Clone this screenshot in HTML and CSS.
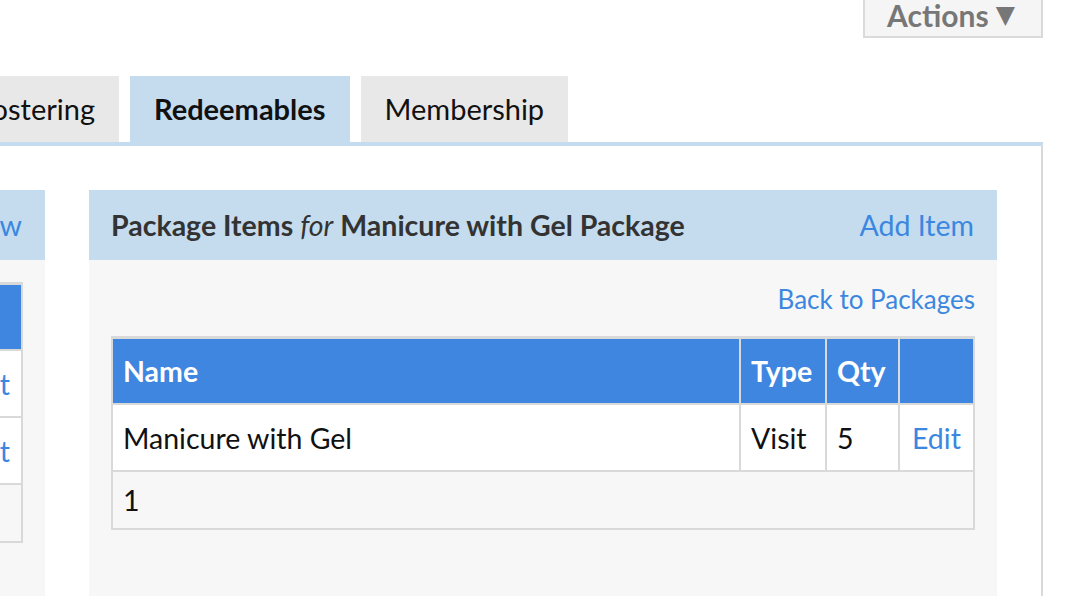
FILE: index.html
```html
<!DOCTYPE html>
<html>
<head>
<meta charset="utf-8">
<link rel="stylesheet" href="styles.css">
</head>
<body>
<div class="page">
  <div class="topbar">
    <div class="actions">Actions <span class="caret">▼</span></div>
  </div>
  <div class="tabs">
    <div class="tab tab-first">Rostering</div>
    <div class="tab tab-active">Redeemables</div>
    <div class="tab">Membership</div>
  </div>
  <div class="panel">
    <div class="box box-left">
      <div class="box-head">
        <span class="box-title">Packages</span>
        <a class="link">Add New</a>
      </div>
      <div class="box-body">
        <table class="grid">
          <thead>
            <tr><th>Name</th><th class="col-edit"></th></tr>
          </thead>
          <tbody>
            <tr><td>Manicure</td><td class="col-edit"><a class="link">Edit</a></td></tr>
            <tr><td>Pedicure</td><td class="col-edit"><a class="link">Edit</a></td></tr>
          </tbody>
          <tfoot>
            <tr><td colspan="2">1</td></tr>
          </tfoot>
        </table>
      </div>
    </div>
    <div class="box box-main">
      <div class="box-head">
        <span class="box-title">Package Items <i>for</i> Manicure with Gel Package</span>
        <a class="link">Add Item</a>
      </div>
      <div class="box-body">
        <div class="back-row"><a class="link">Back to Packages</a></div>
        <table class="grid">
          <thead>
            <tr><th>Name</th><th class="col-type">Type</th><th class="col-qty">Qty</th><th class="col-edit"></th></tr>
          </thead>
          <tbody>
            <tr><td>Manicure with Gel</td><td class="col-type">Visit</td><td class="col-qty">5</td><td class="col-edit"><a class="link">Edit</a></td></tr>
          </tbody>
          <tfoot>
            <tr><td colspan="4">1</td></tr>
          </tfoot>
        </table>
      </div>
    </div>
  </div>
</div>
</body>
</html>
```
FILE: styles.css
```css
html, body {
  margin: 0;
  padding: 0;
  background: #ffffff;
  overflow: hidden;
}
body {
  font-family: Lato, "Open Sans", sans-serif;
  font-size: 28.5px;
  color: #111111;
  width: 1090px;
  height: 596px;
}
.page {
  width: 1043px;
}
.topbar {
  display: flex;
  justify-content: flex-end;
  height: 38px;
}
.actions {
  box-sizing: border-box;
  width: 180px;
  height: 62px;
  margin-top: -24px;
  border: 2px solid #dadada;
  background: #f5f5f5;
  color: #777777;
  font-weight: 700;
  font-size: 30px;
  display: flex;
  align-items: flex-end;
  justify-content: center;
  padding-bottom: 7px;
  padding-right: 4px;
  line-height: 28px;
}
.caret {
  font-family: "DejaVu Sans", sans-serif;
  font-size: 25px;
  margin-left: 7px;
}
.tabs {
  display: flex;
  gap: 11px;
  margin-top: 38px;
  height: 66px;
}
.tab {
  background: #e8e8e8;
  line-height: 66px;
  padding: 0 24px;
  font-size: 29px;
  white-space: nowrap;
}
.tab-first {
  box-sizing: border-box;
  width: 180px;
  margin-left: -61px;
  text-align: right;
}
.tab-active {
  background: #c4dcee;
  font-weight: 700;
}
.panel {
  margin-left: -300px;
  border-top: 4px solid #c4dcee;
  border-right: 2px solid #d9d9d9;
  padding: 44px 44px 0 0;
  display: flex;
  gap: 44px;
  height: 410px;
}
.box {
  background: #f7f7f7;
  display: flex;
  flex-direction: column;
}
.box-left {
  width: 345px;
  flex: none;
}
.box-main {
  flex: 1;
}
.box-head {
  background: #c4dcee;
  height: 70px;
  padding: 0 23px 0 22px;
  display: flex;
  align-items: center;
  justify-content: space-between;
  white-space: nowrap;
}
.box-title {
  font-weight: 700;
  color: #333333;
}
.box-title i {
  font-weight: 400;
}
.link {
  color: #3b87e0;
  text-decoration: none;
}
.box-body {
  padding: 22px;
}
.back-row {
  text-align: right;
  line-height: 34px;
  margin-bottom: 20px;
  font-size: 26px;
}
.grid {
  width: 100%;
  border-collapse: collapse;
  border: 2px solid #d9d9d9;
  border-top-width: 3px;
}
.grid th, .grid td {
  border: 2px solid #d9d9d9;
  padding: 0 10px;
  text-align: left;
  white-space: nowrap;
}
.grid th {
  background: #3f86e0;
  color: #ffffff;
  font-weight: 700;
  height: 64px;
}
.grid tbody td {
  background: #ffffff;
  height: 65px;
}
.grid tfoot td {
  height: 56px;
}
.box-main .grid .col-type {
  width: 64px;
}
.box-main .grid .col-qty {
  width: 51px;
}
.box-main .grid .col-edit {
  width: 49px;
  padding: 0 12px;
}
.box-left .grid .col-edit {
  width: 1%;
  text-align: right;
  padding: 0 11px;
}
```
